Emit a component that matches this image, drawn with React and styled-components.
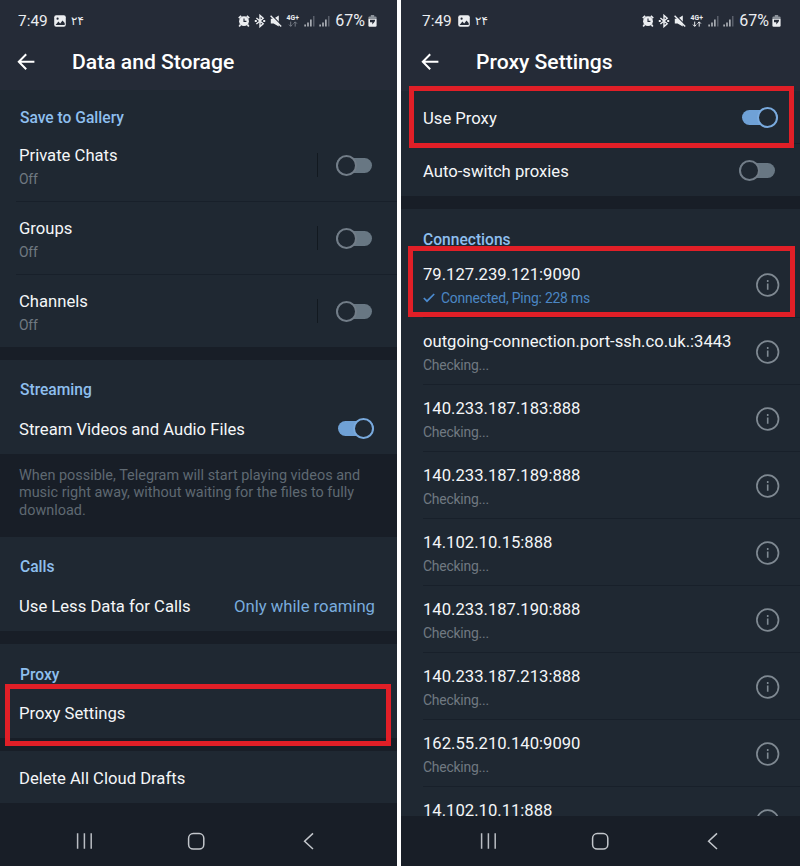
import React from 'react';
import styled, { createGlobalStyle } from 'styled-components';

const GlobalStyle = createGlobalStyle`
  * {
    box-sizing: border-box;
  }

  body {
    margin: 0;
    background: #fff;
    font-family: Roboto, 'Noto Sans', sans-serif;
  }
`;

const Board = styled.div`
  display: flex;
  gap: 4px;
  width: 800px;
  height: 866px;
  overflow: hidden;
`;

const Phone = styled.section`
  position: relative;
  width: ${p => p.$width}px;
  height: 866px;
  flex: none;
  display: flex;
  flex-direction: column;
  background: #181e27;
  overflow: hidden;
`;

const Header = styled.header`
  height: ${p => p.$height}px;
  flex: none;
  padding-left: ${p => p.$shift}px;
  background: #252b37;
`;

const StatusBar = styled.div`
  width: 397px;
  height: 42px;
  padding: 0 20px 0 18px;
  display: flex;
  align-items: center;
  color: #eceef1;

  svg {
    flex: none;
    display: block;
  }
`;

const Clock = styled.span`
  width: 36px;
  font-size: 15.4px;
  line-height: 20px;
`;

const PersianDate = styled.span`
  margin-left: 5px;
  font-family: 'DejaVu Sans', sans-serif;
  font-size: 12px;
  line-height: 20px;
`;

const StatusIcons = styled.div`
  margin-left: auto;
  display: flex;
  align-items: center;
  gap: 4px;
`;

const Battery = styled.span`
  display: flex;
  align-items: center;
  gap: 3px;
  margin-left: 1px;
  font-size: 16px;
  line-height: 20px;
`;

const TitleBar = styled.div`
  height: 40px;
  padding-left: 17px;
  display: flex;
  align-items: center;
  gap: 36px;

  svg {
    display: block;
  }
`;

const Title = styled.h1`
  margin: 0;
  color: #fff;
  font-size: 21.1px;
  font-weight: 500;
  line-height: 26px;
  white-space: nowrap;
`;

const Content = styled.main`
  height: ${p => p.$height}px;
  flex: none;
  overflow: hidden;
`;

const Section = styled.div`
  padding-left: ${p => p.$inset}px;
  margin-bottom: ${p => p.$gap ?? 13}px;
  background: #1f2832;
`;

const SectionTitle = styled.h2`
  margin: 0;
  height: ${p => p.$height}px;
  padding: ${p => p.$top}px 0 0 ${p => p.$indent ?? 0}px;
  color: #8ebfee;
  font-size: 15.6px;
  font-weight: 500;
  line-height: 20px;
`;

const Row = styled.div`
  height: ${p => p.$height ?? 52}px;
  margin-left: -${p => p.$bleed ?? 0}px;
  padding: 0 ${p => p.$right ?? 22}px 0 ${p => p.$bleed ?? 0}px;
  display: flex;
  align-items: center;
  justify-content: space-between;
  border-bottom: ${p => (p.$divider ? '1px solid #18202a' : 'none')};
`;

const RowText = styled.div`
  padding-top: 3px;
`;

const Label = styled.div`
  color: #f4f6f8;
  font-size: 16.65px;
  line-height: 22px;
  white-space: nowrap;
`;

const Hint = styled.div`
  margin-top: 2px;
  display: flex;
  align-items: center;
  gap: 6px;
  color: ${p => (p.$active ? '#4b86c3' : '#707981')};
  font-size: 13.9px;
  line-height: 20px;
  letter-spacing: -0.2px;
  white-space: nowrap;
`;

const Value = styled.span`
  padding-top: 3px;
  color: #79acdd;
  font-size: 16.7px;
  line-height: 22px;
`;

const SwitchSlot = styled.div`
  height: 24px;
  padding-left: 18px;
  display: flex;
  align-items: center;
  border-left: 1px solid #121920;
`;

const InfoSlot = styled.div`
  padding-top: 2px;

  svg {
    display: block;
  }
`;

const Track = styled.div`
  position: relative;
  width: 36px;
  height: 15px;
  border-radius: 8px;
  background: ${p => (p.$on ? '#6fa1d6' : '#687783')};

  &::after {
    content: '';
    position: absolute;
    top: -3px;
    ${p => (p.$on ? 'right: 0' : 'left: 0')};
    width: 21px;
    height: 21px;
    box-sizing: border-box;
    border: 2px solid ${p => (p.$on ? '#79aade' : '#727d88')};
    border-radius: 50%;
    background: #1f2832;
  }
`;

const Note = styled.p`
  margin: 0;
  height: 83px;
  padding: 13px 20px 0 19px;
  color: #5f6972;
  font-size: 14.45px;
  line-height: 17.4px;
`;

const NavBar = styled.nav`
  position: absolute;
  left: ${p => p.$shift}px;
  bottom: 15px;
  width: 397px;
  padding-left: 76px;
  display: flex;
  align-items: center;
`;

const NavButton = styled.span`
  width: ${p => p.$width}px;

  svg {
    display: block;
  }
`;

const Highlight = styled.div`
  position: absolute;
  left: ${p => p.$x}px;
  top: ${p => p.$y}px;
  width: ${p => p.$w}px;
  height: ${p => p.$h}px;
  border: 5px solid #e11f27;
  pointer-events: none;
`;

const ImageIcon = () => (
  <svg width="12" height="12" viewBox="0 0 12 12">
    <rect x="0.2" y="0.2" width="11.6" height="11.6" rx="2" fill="#eceef1" />
    <circle cx="3.6" cy="3.7" r="1.1" fill="#252b37" />
    <path d="M1.6 10 4.4 6.6l1.8 1.8 2.3-3 2.2 2.5V10Z" fill="#252b37" />
  </svg>
);

const AlarmIcon = () => (
  <svg width="12" height="12" viewBox="0 0 12 12" fill="none">
    <path d="M.8 3.2 3.2.8M11.2 3.2 8.8.8M2.6 9.6 1.2 11.4M9.4 9.6l1.4 1.8" stroke="#eceef1" strokeWidth="1.7" />
    <circle cx="6" cy="6.2" r="4.9" fill="#eceef1" />
    <path d="M6 3.4v3h2.4" stroke="#252b37" strokeWidth="1.1" />
  </svg>
);

const BluetoothIcon = () => (
  <svg width="12" height="14" viewBox="0 0 12 14" fill="none" stroke="#eceef1" strokeWidth="1.4">
    <path d="m2.4 4 6.8 5.8L6 12.6V1.4l3.2 2.8L2.4 10" />
    <path d="M.8 7h2M9.2 7h2" strokeWidth="1.8" />
  </svg>
);

const MuteIcon = () => (
  <svg width="12" height="12" viewBox="0 0 12 12">
    <path d="M.8 3.8h2.8L8.8.6v10.8L3.6 8.5H.8Z" fill="#eceef1" />
    <path d="m1.6.2 10.2 10.2" stroke="#252b37" strokeWidth="1.3" />
    <path d="m.6.8 10.6 10.6" stroke="#eceef1" strokeWidth="1.4" />
  </svg>
);

const NetworkIcon = ({ active }) => (
  <svg width="14" height="14" viewBox="0 0 14 14">
    <text x="0.4" y="6" fontFamily="Roboto, sans-serif" fontSize="6.8" fontWeight="700" fill="#eceef1" textLength="12.6">4G+</text>
    <path
      d="M4.7 7.6v4.6M3 10.6l1.7 1.8 1.7-1.8M9.2 12.6V8M7.5 9.6l1.7-1.8 1.7 1.8"
      fill="none"
      stroke={active ? '#eceef1' : '#747a84'}
      strokeWidth="1"
    />
  </svg>
);

const SignalIcon = () => (
  <svg width="11" height="12" viewBox="0 0 11 12">
    <path d="M.5 9.4h1.2v2.2H.5ZM3.4 7.4h1.2v4.2H3.4ZM6.3 4.6h1.2v7H6.3Z" fill="#dfe2e6" />
    <path d="M9.2 1h1.2v10.6H9.2Z" fill="#676d77" />
  </svg>
);

const BatteryIcon = () => (
  <svg width="9" height="12" viewBox="0 0 9 12">
    <path d="M2.8 0h3.4v1.4h1.2Q8.6 1.4 8.6 2.6V4H.4V2.6Q.4 1.4 1.6 1.4h1.2Z" fill="#8c929a" />
    <path d="M.4 4h8.2v6.6q0 1.2-1.2 1.2H1.6Q.4 11.8.4 10.6Z" fill="#eceef1" />
    <path d="M2 4.8h5.2l-.6 2L4.3 9.4V7.2H2Z" fill="#252b37" />
  </svg>
);

const BackArrow = () => (
  <svg width="19" height="18" viewBox="0 0 19 18" fill="none" stroke="#fff" strokeWidth="2">
    <path d="M9.2 1.3 1.8 8.8l7.4 7.5M2 8.8h15.4" />
  </svg>
);

const CheckIcon = () => (
  <svg width="12" height="10" viewBox="0 0 12 10" fill="none" stroke="#4b8bd0" strokeWidth="1.7">
    <path d="m.8 5 3.2 3.2L11.2 1" />
  </svg>
);

const InfoIcon = () => (
  <svg width="24" height="24" viewBox="0 0 24 24" fill="none">
    <circle cx="11.7" cy="12" r="10.8" stroke="#7f8992" strokeWidth="1.7" />
    <path d="M11.7 10.4v6.4M11.7 7v1.9" stroke="#7f8992" strokeWidth="1.6" />
  </svg>
);

const RecentsIcon = () => (
  <svg width="18" height="20" viewBox="0 0 18 20" stroke="#b9bdc3" strokeWidth="1.5">
    <path d="M1.6 2.2v15.6M8.4 2.2v15.6M15.2 2.2v15.6" />
  </svg>
);

const HomeIcon = () => (
  <svg width="18" height="20" viewBox="0 0 18 20" fill="none" stroke="#c3c7cc" strokeWidth="1.5">
    <rect x="1.6" y="2.6" width="15.2" height="15.4" rx="4.6" />
  </svg>
);

const BackIcon = () => (
  <svg width="12" height="20" viewBox="0 0 12 20" fill="none" stroke="#c3c7cc" strokeWidth="1.5">
    <path d="M10 2.4 1.6 10.2l8.4 7.8" />
  </svg>
);

const Switch = ({ on }) => <Track $on={on} />;

const TopBar = ({ title, height, shift = 0, active }) => (
  <Header $height={height} $shift={shift}>
    <StatusBar>
      <Clock>7:49</Clock>
      <ImageIcon />
      <PersianDate>۲۴</PersianDate>
      <StatusIcons>
        <AlarmIcon />
        <BluetoothIcon />
        <MuteIcon />
        <NetworkIcon active={active} />
        <SignalIcon />
        <SignalIcon />
        <Battery>
          67%
          <BatteryIcon />
        </Battery>
      </StatusIcons>
    </StatusBar>
    <TitleBar>
      <BackArrow />
      <Title>{title}</Title>
    </TitleBar>
  </Header>
);

const SystemNav = ({ shift = 0 }) => (
  <NavBar $shift={shift}>
    <NavButton $width={111}>
      <RecentsIcon />
    </NavButton>
    <NavButton $width={116}>
      <HomeIcon />
    </NavButton>
    <NavButton $width={12}>
      <BackIcon />
    </NavButton>
  </NavBar>
);

const galleryRows = ['Private Chats', 'Groups', 'Channels'];

const proxies = [
  { address: '79.127.239.121:9090', connected: true },
  { address: 'outgoing-connection.port-ssh.co.uk.:3443' },
  { address: '140.233.187.183:888' },
  { address: '140.233.187.189:888' },
  { address: '14.102.10.15:888' },
  { address: '140.233.187.190:888' },
  { address: '140.233.187.213:888' },
  { address: '162.55.210.140:9090' },
  { address: '14.102.10.11:888' },
];

const DataAndStorage = () => (
  <Phone $width={397}>
    <TopBar title="Data and Storage" height={90} />
    <Content $height={714}>
      <Section $inset={19}>
        <SectionTitle $height={39} $top={18} $indent={1}>Save to Gallery</SectionTitle>
        {galleryRows.map((name, i) => (
          <Row key={name} $height={i === 2 ? 72 : 73} $right={25} $bleed={3} $divider={i < 2}>
            <RowText>
              <Label>{name}</Label>
              <Hint>Off</Hint>
            </RowText>
            <SwitchSlot>
              <Switch />
            </SwitchSlot>
          </Row>
        ))}
      </Section>

      <Section $inset={19} $gap={0}>
        <SectionTitle $height={42} $top={20} $indent={1}>Streaming</SectionTitle>
        <Row $right={23}>
          <RowText>
            <Label>Stream Videos and Audio Files</Label>
          </RowText>
          <Switch on />
        </Row>
      </Section>
      <Note>
        When possible, Telegram will start playing videos and music right away, without waiting for the files to fully download.
      </Note>

      <Section $inset={19}>
        <SectionTitle $height={42} $top={20} $indent={1}>Calls</SectionTitle>
        <Row>
          <RowText>
            <Label>Use Less Data for Calls</Label>
          </RowText>
          <Value>Only while roaming</Value>
        </Row>
      </Section>

      <Section $inset={19}>
        <SectionTitle $height={42} $top={21} $indent={1}>Proxy</SectionTitle>
        <Row>
          <RowText>
            <Label>Proxy Settings</Label>
          </RowText>
        </Row>
      </Section>

      <Section $inset={19} $gap={0}>
        <Row>
          <RowText>
            <Label>Delete All Cloud Drafts</Label>
          </RowText>
        </Row>
      </Section>
    </Content>
    <SystemNav />
    <Highlight $x={5} $y={684} $w={386} $h={62} />
  </Phone>
);

const ProxySettings = () => (
  <Phone $width={399}>
    <TopBar title="Proxy Settings" height={91} shift={3} active />
    <Content $height={725}>
      <Section $inset={22}>
        <Row $height={53} $divider>
          <RowText>
            <Label>Use Proxy</Label>
          </RowText>
          <Switch on />
        </Row>
        <Row $right={25}>
          <RowText>
            <Label>Auto-switch proxies</Label>
          </RowText>
          <Switch />
        </Row>
      </Section>

      <Section $inset={22}>
        <SectionTitle $height={42} $top={21}>Connections</SectionTitle>
        {proxies.map(({ address, connected }) => (
          <Row key={address} $height={67} $right={20} $divider>
            <RowText>
              <Label>{address}</Label>
              <Hint $active={connected}>
                {connected && <CheckIcon />}
                {connected ? 'Connected, Ping: 228 ms' : 'Checking...'}
              </Hint>
            </RowText>
            <InfoSlot>
              <InfoIcon />
            </InfoSlot>
          </Row>
        ))}
      </Section>
    </Content>
    <SystemNav shift={3} />
    <Highlight $x={8} $y={86} $w={385} $h={62} />
    <Highlight $x={7} $y={246} $w={387} $h={71} />
  </Phone>
);

const App = () => {
  return (
    <>
      <GlobalStyle />
      <Board>
        <DataAndStorage />
        <ProxySettings />
      </Board>
    </>
  );
};

export default App;
